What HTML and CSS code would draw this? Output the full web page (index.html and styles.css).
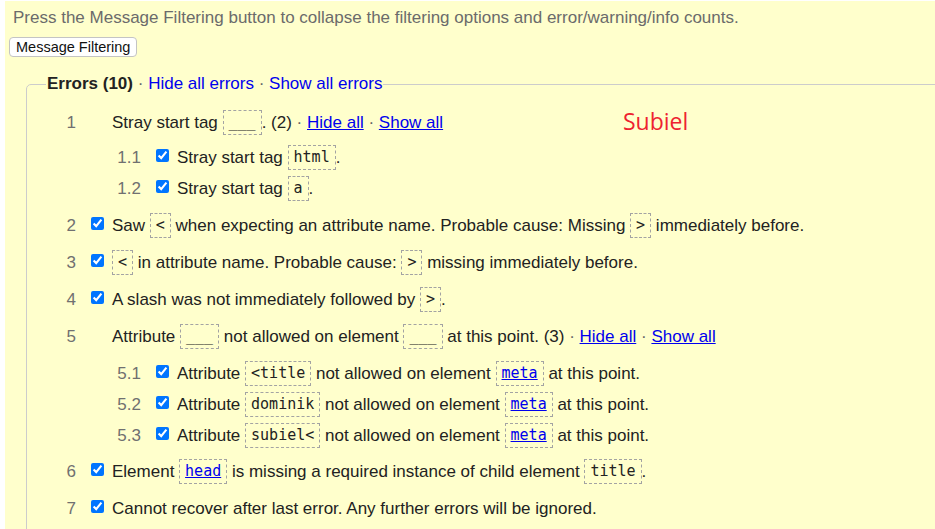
FILE: index.html
```html
<!DOCTYPE html>
<html lang="en">
<head>
<meta charset="utf-8">
<title>Message Filtering</title>
<link rel="stylesheet" href="styles.css">
</head>
<body>
<div class="page">
  <p class="hint">Press the Message Filtering button to collapse the filtering options and error/warning/info counts.</p>
  <button class="filter-btn" type="button">Message Filtering</button>
  <span class="note">Subiel</span>
  <fieldset class="errors">
    <legend><strong>Errors (10)</strong> <span class="dot">·</span> <a href="#">Hide all errors</a> <span class="dot">·</span> <a href="#">Show all errors</a></legend>
    <ol class="msgs">
      <li class="msg">
        <div class="row"><span class="num">1</span><span class="text indent">Stray start tag <code>___</code>. (2) <span class="dot">·</span> <a class="u" href="#">Hide all</a> <span class="dot">·</span> <a class="u" href="#">Show all</a></span></div>
        <ol class="sub">
          <li class="row"><span class="num">1.1</span><input type="checkbox" checked><span class="text">Stray start tag <code>html</code>.</span></li>
          <li class="row"><span class="num">1.2</span><input type="checkbox" checked><span class="text">Stray start tag <code>a</code>.</span></li>
        </ol>
      </li>
      <li class="msg">
        <div class="row"><span class="num">2</span><input type="checkbox" checked><span class="text">Saw <code>&lt;</code> when expecting an attribute name. Probable cause: Missing <code>&gt;</code> immediately before.</span></div>
      </li>
      <li class="msg">
        <div class="row"><span class="num">3</span><input type="checkbox" checked><span class="text"><code>&lt;</code> in attribute name. Probable cause: <code>&gt;</code> missing immediately before.</span></div>
      </li>
      <li class="msg">
        <div class="row"><span class="num">4</span><input type="checkbox" checked><span class="text">A slash was not immediately followed by <code>&gt;</code>.</span></div>
      </li>
      <li class="msg">
        <div class="row"><span class="num">5</span><span class="text indent">Attribute <code>___</code> not allowed on element <code>___</code> at this point. (3) <span class="dot">·</span> <a class="u" href="#">Hide all</a> <span class="dot">·</span> <a class="u" href="#">Show all</a></span></div>
        <ol class="sub sub-wide">
          <li class="row"><span class="num">5.1</span><input type="checkbox" checked><span class="text">Attribute <code>&lt;title</code> not allowed on element <code><a href="#">meta</a></code> at this point.</span></li>
          <li class="row"><span class="num">5.2</span><input type="checkbox" checked><span class="text">Attribute <code>dominik</code> not allowed on element <code><a href="#">meta</a></code> at this point.</span></li>
          <li class="row"><span class="num">5.3</span><input type="checkbox" checked><span class="text">Attribute <code>subiel&lt;</code> not allowed on element <code><a href="#">meta</a></code> at this point.</span></li>
        </ol>
      </li>
      <li class="msg msg-tight">
        <div class="row"><span class="num">6</span><input type="checkbox" checked><span class="text">Element <code><a href="#">head</a></code> is missing a required instance of child element <code>title</code>.</span></div>
      </li>
      <li class="msg">
        <div class="row"><span class="num">7</span><input type="checkbox" checked><span class="text">Cannot recover after last error. Any further errors will be ignored.</span></div>
      </li>
    </ol>
  </fieldset>
</div>
</body>
</html>
```

FILE: styles.css
```css
html, body {
  margin: 0;
  padding: 0;
  background: #ffffff;
  overflow: hidden;
}

body {
  font-family: "Liberation Sans", Arial, sans-serif;
  font-size: 17px;
  color: #222222;
}

.page {
  position: relative;
  margin: 1px 0 0 5px;
  padding: 7px 0 0 4px;
  background: #ffffcc;
  height: 528px;
  box-sizing: border-box;
  overflow: hidden;
}

.hint {
  margin: 0 0 0 4px;
  line-height: 20px;
  color: #6b6b6b;
}

.filter-btn {
  display: block;
  margin: 9px 0 0 0;
  height: 20px;
  padding: 0 6px;
  font-family: "Liberation Sans", Arial, sans-serif;
  font-size: 14.5px;
  line-height: 18px;
  color: #111;
  background: #ffffff;
  border: 1px solid #c4c4c4;
  border-radius: 4px;
}

.note {
  position: absolute;
  left: 618px;
  top: 104px;
  font-family: "Open Sans", "Noto Sans", sans-serif;
  font-size: 23px;
  color: #ee2230;
}

.errors {
  margin: 17px -60px 0 17px;
  padding: 4px 0 0 19px;
  border: 1px solid #cccccc;
  border-radius: 5px;
  min-height: 600px;
}

.errors legend {
  padding: 0 1px;
  line-height: 20px;
  color: #222222;
}

.errors legend strong {
  font-weight: bold;
}

a {
  color: #0000ee;
  text-decoration: none;
}

a.u,
code a {
  text-decoration: underline;
}

.dot {
  color: #666666;
}

.msgs,
.sub {
  list-style: none;
  margin: 0;
  padding: 0;
}

.msg {
  margin-top: 12px;
}

.msg.msg-tight {
  margin-top: 11px;
}

.sub {
  margin-top: 10px;
  padding-left: 65px;
}

.sub.sub-wide {
  margin-top: 12px;
}

.sub .row + .row {
  margin-top: 6px;
}

.row {
  display: flex;
  align-items: center;
  height: 25px;
}

.num {
  flex: none;
  width: 30px;
  margin-right: 15px;
  text-align: right;
  color: #707070;
  line-height: 25px;
}

.row input[type="checkbox"] {
  flex: none;
  align-self: flex-start;
  width: 13px;
  height: 13px;
  margin: 4px 8px 0 0;
}

.text {
  line-height: 25px;
  white-space: nowrap;
}

.text.indent {
  margin-left: 21px;
}

code {
  display: inline-block;
  vertical-align: middle;
  font-family: "DejaVu Sans Mono", "Liberation Mono", monospace;
  font-size: 15px;
  line-height: 19px;
  padding: 2px 5px;
  border: 1px dashed #a3a3a3;
  color: #222222;
  position: relative;
  top: -1px;
}
```
